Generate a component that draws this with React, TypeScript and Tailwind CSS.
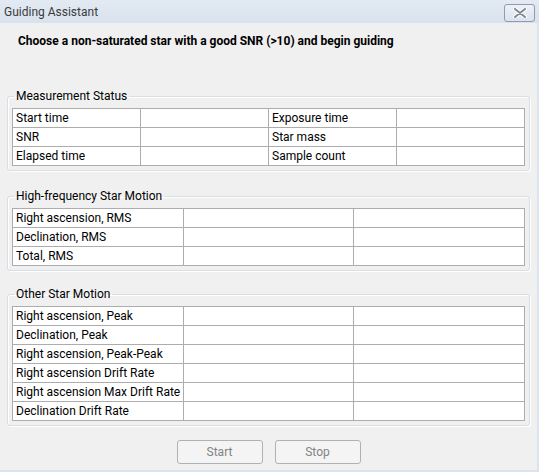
const font = { fontFamily: "Roboto, 'Noto Sans', sans-serif" };

function Grid({ rows, cols }: { rows: string[][]; cols: string }) {
    return (
        <div className={`grid ${cols} w-[513px] gap-px p-px bg-[#adadad]`}>
            {rows.flat().map((cell, i) => (
                <div
                    key={i}
                    className="h-[18px] bg-white pl-[3px] text-[12px] leading-[18px] text-black whitespace-nowrap overflow-hidden"
                >
                    {cell}
                </div>
            ))}
        </div>
    );
}

function Group({
    title,
    className,
    children,
}: {
    title: string;
    className?: string;
    children: React.ReactNode;
}) {
    return (
        <fieldset
            className={`ml-[7px] w-[523px] rounded-[3px] border border-[#d5dfe5] px-[4px] pt-[4px] pb-[4px] shadow-[inset_1px_1px_0_#ffffff,1px_1px_0_#ffffff] ${className ?? ""}`}
        >
            <legend className="ml-[2px] px-[2px] text-[12px] leading-[16px] text-black">
                {title}
            </legend>
            {children}
        </fieldset>
    );
}

export default function App() {
    const status = [
        ["Start time", "", "Exposure time", ""],
        ["SNR", "", "Star mass", ""],
        ["Elapsed time", "", "Sample count", ""],
    ];
    const highFreq = [
        ["Right ascension, RMS", "", ""],
        ["Declination, RMS", "", ""],
        ["Total, RMS", "", ""],
    ];
    const other = [
        ["Right ascension, Peak", "", ""],
        ["Declination, Peak", "", ""],
        ["Right ascension, Peak-Peak", "", ""],
        ["Right ascension Drift Rate", "", ""],
        ["Right ascension Max Drift Rate", "", ""],
        ["Declination Drift Rate", "", ""],
    ];

    return (
        <div className="w-[539px] h-[472px] flex flex-col overflow-hidden" style={font}>
            {/* title bar */}
            <div className="h-[23px] flex items-center justify-between bg-gradient-to-b from-[#e3eaf3] to-[#d8e2ed] pl-[4px] pr-[4px]">
                <span className="text-[12px] text-[#3b3b3b]">Guiding Assistant</span>
                <button className="mt-[3px] w-[31px] h-[18px] flex items-center justify-center rounded-[3px] border border-[#8e9bb0] bg-gradient-to-b from-[#eef2f7] to-[#dbe3ee]">
                    <svg width="14" height="10" viewBox="0 0 14 10">
                        <path
                            d="M2 1 L12 9 M12 1 L2 9"
                            stroke="#ffffff"
                            strokeWidth="4"
                            strokeLinecap="round"
                        />
                        <path
                            d="M2 1 L12 9 M12 1 L2 9"
                            stroke="#7d8796"
                            strokeWidth="2"
                            strokeLinecap="round"
                        />
                    </svg>
                </button>
            </div>

            {/* body */}
            <div className="flex-1 flex flex-col bg-[#f0f0f0] border-r-2 border-b-2 border-[#d9e4f0]">
                <p className="mt-[10px] ml-[18px] text-[12px] leading-[16px] font-bold text-black">
                    Choose a non-saturated star with a good SNR (&gt;10) and begin guiding
                </p>

                <Group title="Measurement Status" className="mt-[39px]">
                    <Grid rows={status} cols="grid-cols-4" />
                </Group>

                <Group title="High-frequency Star Motion" className="mt-[17px]">
                    <Grid rows={highFreq} cols="grid-cols-3" />
                </Group>

                <Group title="Other Star Motion" className="mt-[15px]">
                    <Grid rows={other} cols="grid-cols-3" />
                </Group>

                <div className="mt-[14px] flex justify-center gap-3">
                    {["Start", "Stop"].map((b) => (
                        <button
                            key={b}
                            disabled
                            className="w-[86px] h-[24px] rounded-[3px] border border-[#adb2b5] bg-[#f4f4f4] text-[12px] text-[#838383]"
                        >
                            {b}
                        </button>
                    ))}
                </div>
            </div>
        </div>
    );
}
